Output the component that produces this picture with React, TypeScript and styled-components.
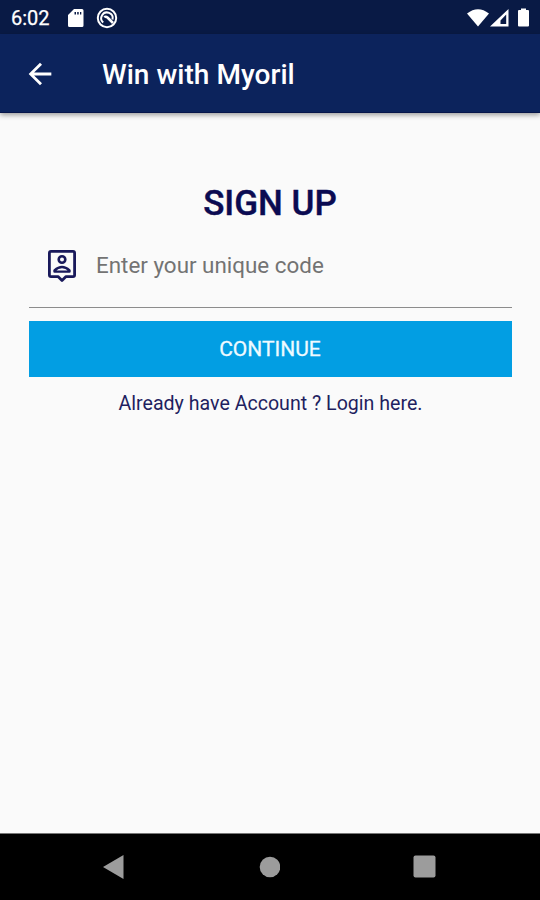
import React from 'react';
import styled, { createGlobalStyle } from 'styled-components';

const GlobalStyle = createGlobalStyle`
  * { box-sizing: border-box; }
  body { margin: 0; background: #fafafa; font-family: Roboto, sans-serif; }
`;

const Screen = styled.div`
  width: 540px;
  height: 900px;
  display: flex;
  flex-direction: column;
  overflow: hidden;
  background: #fafafa;
`;

const StatusBar = styled.header`
  height: 34px;
  flex: none;
  display: flex;
  align-items: center;
  padding: 1px 10px 0 11px;
  background: #091a45;
  color: #fff;
`;

const Clock = styled.span`
  width: 56px;
  padding-top: 1px;
  font-size: 20px;
  font-weight: 400;
  line-height: 34px;
  white-space: nowrap;
  -webkit-text-stroke: 0.25px currentColor;
`;

const Icon = styled.svg`
  display: block;
  flex: none;
`;

const NoticeIcon = styled(Icon)`
  margin-left: 11px;
`;

const StatusRight = styled.div`
  margin-left: auto;
  display: flex;
`;

const AppBar = styled.div`
  height: 79px;
  flex: none;
  display: flex;
  align-items: center;
  padding: 1px 0 0 23px;
  background: #0c235c;
  border-bottom: 1px solid #07154a;
  box-shadow: 0 2px 5px rgba(0, 0, 0, 0.38);
`;

const BackButton = styled.button`
  width: 79px;
  padding: 0;
  border: 0;
  background: none;
  color: #fff;
`;

const Title = styled.h1`
  margin: 0;
  padding-top: 2px;
  font-size: 28px;
  font-weight: 500;
  line-height: 36px;
  letter-spacing: 0.04px;
  color: #fff;
  white-space: nowrap;
`;

const Content = styled.main`
  flex: 1;
  display: flex;
  flex-direction: column;
  padding: 69px 28px 0 29px;
`;

const Heading = styled.h2`
  margin: 0;
  padding-right: 1px;
  text-align: center;
  font-size: 35px;
  font-weight: 500;
  line-height: 44px;
  color: #0b0b52;
  -webkit-text-stroke: 0.4px currentColor;
`;

const Field = styled.label`
  height: 82px;
  display: flex;
  align-items: flex-start;
  padding: 23px 0 0 18px;
  border-bottom: 1px solid #8c8c8c;
`;

const CodeInput = styled.input`
  flex: 1;
  min-width: 0;
  height: 30px;
  margin: 1px 0 0 19px;
  padding: 0;
  border: 0;
  outline: 0;
  background: none;
  font: 400 22.4px/30px Roboto, sans-serif;
  color: #222;
  &::placeholder { color: #737373; opacity: 1; }
`;

const Continue = styled.button`
  height: 56px;
  margin: 13px 0 0;
  padding: 0 1px 0 0;
  border: 0;
  background: #029ee3;
  color: #eefaff;
  font: 400 21px/56px Roboto, sans-serif;
  -webkit-text-stroke: 0.3px currentColor;
`;

const LoginLink = styled.a`
  margin-top: 14px;
  text-align: center;
  font-size: 19.6px;
  line-height: 26px;
  color: #1f1f60;
  white-space: nowrap;
`;

const NavBar = styled.nav`
  height: 67px;
  flex: none;
  display: flex;
  align-items: center;
  justify-content: space-between;
  padding: 0 104px 1px 102px;
  background: #000;
  border-top: 1px solid #777;
`;

export default function App() {
  return (
    <>
      <GlobalStyle />
      <Screen>
        <StatusBar>
          <Clock>6:02</Clock>
          <Icon width="18" height="20" viewBox="0 0 18 20">
            <path fill="#fff" fillRule="evenodd" d="M7 1h8Q16.500 1 16.500 2.500v15q0 1.500-1.500 1.500H2.500Q1 19 1 17.500V7zM7.500 4v2.500h1.500V4zM10.200 4v2.500h1.500V4zM13 4v2.500h1.300V4z" />
          </Icon>
          <NoticeIcon width="22" height="22" viewBox="0 0 22 22" fill="none" stroke="#fff">
            <circle cx="11" cy="11" r="9.200" strokeWidth="2" />
            <path d="M7.200 15.500A5.700 5.700 0 1 1 16.500 12.500" strokeWidth="2" />
            <path d="M8.500 10.500q1-1.500 3 0L17 16" strokeWidth="2.600" />
          </NoticeIcon>
          <StatusRight>
            <Icon width="63" height="20" viewBox="0 0 63 20">
              <path fill="#fff" d="M0 5.500Q11 -3 22 5.500L11 18.500z" />
              <path fill="#fff" fillRule="evenodd" d="M41.500 1v17.500H23zM39.200 6.500L33.500 12.500V16h5.700z" />
              <path fill="#fff" d="M52 2h2V.5h5V2h2q1 0 1 1v14.500q0 1-1 1h-9q-1 0-1-1V3q0-1 1-1z" />
            </Icon>
          </StatusRight>
        </StatusBar>
        <AppBar>
          <BackButton aria-label="Back">
            <Icon width="34" height="34" viewBox="0 0 24 24">
              <path fill="currentColor" d="M20 11H7.830l5.590-5.590L12 4l-8 8 8 8 1.410-1.410L7.830 13H20v-2z" />
            </Icon>
          </BackButton>
          <Title>Win with Myoril</Title>
        </AppBar>
        <Content>
          <Heading>SIGN UP</Heading>
          <Field>
            <Icon width="30" height="34" viewBox="0 0 30 34" fill="none" stroke="#19195b" strokeWidth="2.800">
              <path strokeLinejoin="round" d="M4 2.400h22q1.600 0 1.600 1.600v22q0 1.600-1.600 1.600h-7L15 31.500l-4-3.900H4q-1.600 0-1.600-1.600V4Q2.400 2.400 4 2.400z" />
              <circle cx="15" cy="10.500" r="3.300" strokeWidth="2.600" />
              <path strokeLinejoin="round" strokeWidth="2.400" d="M7.500 22.600v-1.200q7.500-6.800 15 0v1.200z" />
            </Icon>
            <CodeInput placeholder="Enter your unique code" />
          </Field>
          <Continue>CONTINUE</Continue>
          <LoginLink>Already have Account ? Login here.</LoginLink>
        </Content>
        <NavBar>
          <Icon width="22" height="24" viewBox="0 0 22 24"><path fill="#9c9c9c" d="M1 12L21.500 0v24z" /></Icon>
          <Icon width="22" height="22" viewBox="0 0 22 22"><circle cx="12" cy="11" r="10.300" fill="#9c9c9c" /></Icon>
          <Icon width="23" height="23" viewBox="0 0 23 23"><rect x=".5" y=".5" width="22" height="22" rx="2" fill="#9c9c9c" /></Icon>
        </NavBar>
      </Screen>
    </>
  );
}
